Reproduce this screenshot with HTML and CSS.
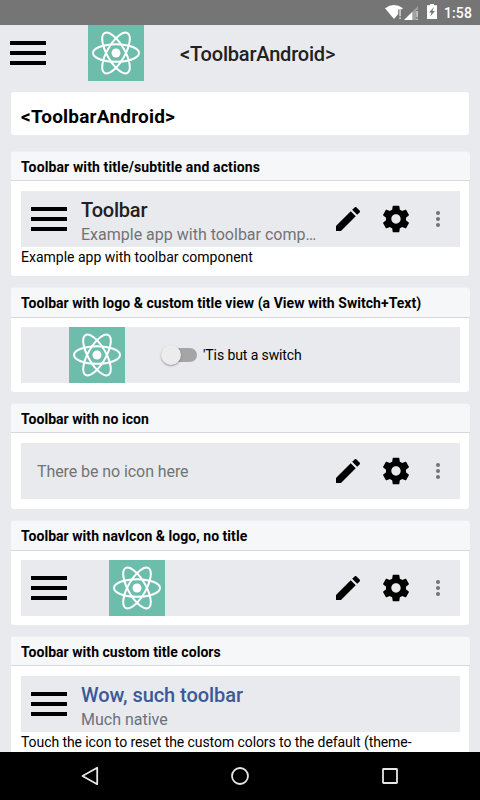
FILE: index.html
```html
<!DOCTYPE html>
<html lang="en">
<head>
<meta charset="utf-8">
<title>ToolbarAndroid</title>
<link rel="stylesheet" href="styles.css">
</head>
<body>
<svg class="defs" aria-hidden="true">
  <symbol id="menu" viewBox="0 0 36 24"><path d="M0 0h36v4H0zM0 10h36v4H0zM0 20h36v4H0z"/></symbol>
  <symbol id="react" viewBox="0 0 56 56">
    <rect width="56" height="56" fill="#6cbdac"/>
    <g fill="none" stroke="#fff" stroke-width="2">
      <ellipse cx="28" cy="28" rx="23" ry="8.8"/>
      <ellipse cx="28" cy="28" rx="23" ry="8.8" transform="rotate(60 28 28)"/>
      <ellipse cx="28" cy="28" rx="23" ry="8.8" transform="rotate(120 28 28)"/>
    </g>
    <circle cx="28" cy="28" r="4.5" fill="#fff"/>
  </symbol>
  <symbol id="edit" viewBox="0 0 24 24"><path d="M3 17.25V21h3.75L17.81 9.94l-3.75-3.75L3 17.25zM20.71 7.04c.39-.39.39-1.02 0-1.41l-2.34-2.34c-.39-.39-1.02-.39-1.41 0l-1.83 1.83 3.75 3.75 1.83-1.83z"/></symbol>
  <symbol id="gear" viewBox="0 0 24 24"><path d="M19.43 12.98c.04-.32.07-.64.07-.98s-.03-.66-.07-.98l2.11-1.65c.19-.15.24-.42.12-.64l-2-3.46c-.12-.22-.39-.3-.61-.22l-2.49 1c-.52-.4-1.08-.73-1.69-.98l-.38-2.65C14.46 2.18 14.25 2 14 2h-4c-.25 0-.46.18-.49.42l-.38 2.65c-.61.25-1.17.59-1.69.98l-2.49-1c-.23-.09-.49 0-.61.22l-2 3.46c-.13.22-.07.49.12.64l2.11 1.65c-.04.32-.07.65-.07.98s.03.66.07.98l-2.11 1.65c-.19.15-.24.42-.12.64l2 3.46c.12.22.39.3.61.22l2.49-1c.52.4 1.08.73 1.69.98l.38 2.65c.03.24.24.42.49.42h4c.25 0 .46-.18.49-.42l.38-2.65c.61-.25 1.17-.59 1.69-.98l2.49 1c.23.09.49 0 .61-.22l2-3.46c.12-.22.07-.49-.12-.64l-2.11-1.65zM12 15.5c-1.93 0-3.5-1.57-3.5-3.5s1.57-3.5 3.5-3.5 3.5 1.57 3.5 3.5-1.57 3.5-3.5 3.5z"/></symbol>
  <symbol id="more" viewBox="0 0 4 16"><g fill="#727376"><circle cx="2" cy="2" r="2"/><circle cx="2" cy="8" r="2"/><circle cx="2" cy="14" r="2"/></g></symbol>
</svg>

<header class="status">
  <svg class="wifi" viewBox="0 0 18 16"><path d="M0 4.2Q9 -2.4 18 4.2L16.8 5.4H13.2v4.6L9 15z" fill="#fff"/><path d="M14.4 6h1.3v6.2h-1.3zM14.4 13.4h1.3v1.5h-1.3z" fill="#e8e8e8"/></svg>
  <svg class="signal" viewBox="0 0 15 14"><path d="M14 0v4h-2v10H8V6z" fill="#a0a0a0"/><path d="M0 14L8.3 5.7V14z" fill="#fff"/><path d="M12.4 5h1.3v6.2h-1.3zM12.4 12.4h1.3V14h-1.3z" fill="#e0e0e0"/></svg>
  <svg class="battery" viewBox="0 0 10 15"><path d="M3 0h4v1.2h3V15H0V1.2h3z" fill="#fff"/><path d="M7 3L2 8.6h2.5L3.2 12.6 8 7H5.5z" fill="#757575"/></svg>
  <span class="clock">1:58</span>
</header>

<nav class="appbar">
  <svg class="menu"><use href="#menu"/></svg>
  <svg class="logo"><use href="#react"/></svg>
  <h1 class="app-title">&lt;ToolbarAndroid&gt;</h1>
</nav>

<main class="content">
  <div class="page-title">&lt;ToolbarAndroid&gt;</div>

  <section class="card card-actions">
    <h2 class="heading">Toolbar with title/subtitle and actions</h2>
    <div class="toolbar">
      <svg class="menu"><use href="#menu"/></svg>
      <div class="titles"><div class="title">Toolbar</div><div class="subtitle">Example app with toolbar comp…</div></div>
      <div class="actions"><svg class="icon"><use href="#edit"/></svg><svg class="icon"><use href="#gear"/></svg><svg class="more"><use href="#more"/></svg></div>
    </div>
    <p class="note">Example app with toolbar component</p>
  </section>

  <section class="card card-switch">
    <h2 class="heading tall">Toolbar with logo &amp; custom title view (a View with Switch+Text)</h2>
    <div class="toolbar">
      <svg class="logo inset"><use href="#react"/></svg>
      <div class="switch"><span class="thumb"></span></div>
      <span class="switch-label">'Tis but a switch</span>
    </div>
  </section>

  <section class="card card-plain">
    <h2 class="heading">Toolbar with no icon</h2>
    <div class="toolbar">
      <div class="subtitle lone">There be no icon here</div>
      <div class="actions"><svg class="icon"><use href="#edit"/></svg><svg class="icon"><use href="#gear"/></svg><svg class="more"><use href="#more"/></svg></div>
    </div>
  </section>

  <section class="card card-logo">
    <h2 class="heading tall">Toolbar with navIcon &amp; logo, no title</h2>
    <div class="toolbar">
      <svg class="menu"><use href="#menu"/></svg>
      <svg class="logo"><use href="#react"/></svg>
      <div class="actions"><svg class="icon"><use href="#edit"/></svg><svg class="icon"><use href="#gear"/></svg><svg class="more"><use href="#more"/></svg></div>
    </div>
  </section>

  <section class="card card-colors">
    <h2 class="heading">Toolbar with custom title colors</h2>
    <div class="toolbar">
      <svg class="menu"><use href="#menu"/></svg>
      <div class="titles"><div class="title blue">Wow, such toolbar</div><div class="subtitle slate">Much native</div></div>
    </div>
    <p class="note">Touch the icon to reset the custom colors to the default (theme-</p>
  </section>
</main>

<footer class="navbar">
  <svg viewBox="0 0 24 24"><path d="M4.5 12L19.2 3.8v16.4z"/></svg>
  <svg viewBox="0 0 24 24"><circle cx="12" cy="12" r="8"/></svg>
  <svg viewBox="0 0 24 24"><rect x="5" y="5" width="14" height="14" rx=".5"/></svg>
</footer>
</body>
</html>
```
FILE: styles.css
```css
* { box-sizing: border-box; }
body {
  margin: 0;
  width: 480px;
  height: 800px;
  overflow: hidden;
  display: flex;
  flex-direction: column;
  background: #e9eaed;
  color: #000;
  font-family: Roboto, sans-serif;
}
svg { display: block; flex: none; }
h1, h2, p { margin: 0; }
.defs { position: absolute; width: 0; height: 0; }

.status {
  flex: none;
  height: 25px;
  background: #757575;
  display: flex;
  align-items: flex-start;
  padding-left: 385px;
}
.wifi { width: 18px; height: 16px; margin-top: 4px; }
.signal { width: 15px; height: 14px; margin: 6px 0 0 1px; }
.battery { width: 10px; height: 15px; margin: 4px 0 0 8px; }
.clock { margin-left: 7px; color: #fff; font-size: 14px; line-height: 26px; font-weight: 500; letter-spacing: .1px; }

.appbar { flex: none; height: 56px; display: flex; align-items: center; padding-left: 10px; }
.menu { width: 36px; height: 24px; }
.logo { width: 56px; height: 56px; margin-left: 42px; }
.app-title { margin-left: 36px; padding-top: 2px; font-size: 20px; line-height: 24px; font-weight: 500; letter-spacing: -.2px; color: #212121; }

.content { flex: 1; min-height: 0; overflow: hidden; padding: 11px 10px 0 11px; }
.page-title {
  width: 458px;
  height: 43px;
  padding: 12px 10px 0;
  background: #fff;
  border-radius: 3px;
  font-size: 19px;
  line-height: 25px;
  font-weight: 700;
  letter-spacing: .2px;
}
.card {
  width: 458px;
  background: #fff;
  border-radius: 3px;
  box-shadow: 0 -1px 0 #eeeff1;
}
.card-actions { height: 124px; margin-top: 17px; }
.card-switch { height: 104px; margin-top: 12px; }
.card-plain { height: 105px; margin-top: 12px; }
.card-logo { height: 104px; margin-top: 12px; }
.card-colors { height: 140px; margin-top: 12px; }
.heading {
  width: 459px;
  height: 29px;
  padding-left: 10px;
  border-bottom: 1px solid #d6d7da;
  border-radius: 3px 3px 0 0;
  background: #f6f7f8;
  font-size: 14px;
  line-height: 30px;
  font-weight: 700;
  letter-spacing: .04px;
  white-space: nowrap;
}
.card-actions .heading { letter-spacing: .12px; }
.heading.tall { height: 30px; }
.toolbar {
  width: 439px;
  height: 56px;
  margin: 10px 0 0 10px;
  padding-left: 10px;
  display: flex;
  align-items: center;
  background: #e9eaed;
}
.tall + .toolbar { margin-top: 9px; }
.titles { width: 238px; margin-left: 14px; padding-top: 6px; }
.title { font-size: 20px; line-height: 24px; font-weight: 500; letter-spacing: -.2px; color: #212121; }
.subtitle { font-size: 16px; line-height: 23px; color: #727376; white-space: nowrap; }
.titles .subtitle { margin-top: 1px; }
.blue { color: #3b5998; letter-spacing: -.06px; }
.subtitle.slate { color: #6a7180; }
.lone { padding-left: 6px; letter-spacing: -.08px; }
.actions { margin-left: auto; padding-right: 20px; display: flex; align-items: center; }
.icon { width: 32px; height: 32px; margin-right: 16px; }
.more { width: 4px; height: 16px; margin-left: 8px; }
.logo.inset { margin-left: 38px; }
.note { padding-left: 10px; font-size: 14px; line-height: 20px; white-space: nowrap; }
.card-colors .note { letter-spacing: -.08px; }
.switch {
  width: 32px;
  height: 14px;
  margin-left: 40px;
  border-radius: 7px;
  background: #a5a5a6;
  display: flex;
  align-items: center;
}
.thumb {
  flex: none;
  width: 20px;
  height: 20px;
  margin-left: -4px;
  border-radius: 50%;
  background: #ececec;
  box-shadow: 0 1px 2px rgba(0, 0, 0, .35);
}
.switch-label { margin-left: 6px; font-size: 14px; letter-spacing: -.1px; }

.navbar {
  flex: none;
  height: 48px;
  background: #000;
  display: flex;
  justify-content: center;
  gap: 126px;
  align-items: center;
}
.navbar svg { width: 24px; height: 24px; fill: none; stroke: #e6e6e6; stroke-width: 1.8; stroke-linejoin: round; }
```
